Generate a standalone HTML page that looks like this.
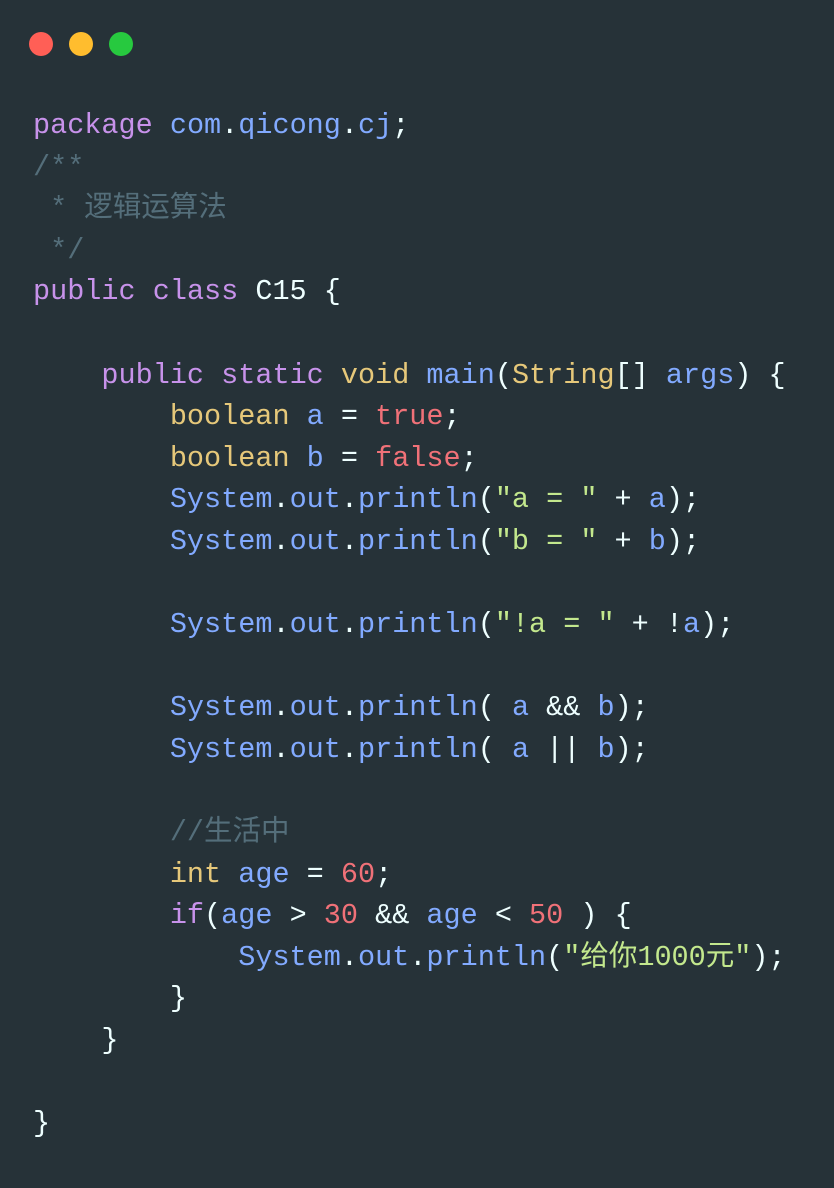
<!DOCTYPE html>
<html><head><meta charset="utf-8"><style>
html,body{margin:0;padding:0;background:#263238;width:834px;height:1188px;overflow:hidden}
.dots{position:absolute;top:32px;left:29px}
.dots span{position:absolute;width:24px;height:24px;border-radius:50%;top:0}
pre{position:absolute;left:33px;top:105px;margin:0;font-family:"Liberation Mono","Noto Sans CJK SC",monospace;font-size:28.5px;line-height:41.6px;color:#eeffff}
.k{color:#c792ea}.b{color:#82aaff}.c{color:#546e7a}.y{color:#e6c87a}.n{color:#f07178}.s{color:#c3e88d}
</style></head><body>
<div class="dots"><span style="left:0;background:#ff5f56"></span><span style="left:40px;background:#ffbd2e"></span><span style="left:80px;background:#27c93f"></span></div>
<pre><span class="k">package</span> <span class="b">com</span>.<span class="b">qicong</span>.<span class="b">cj</span>;
<span class="c">/**
 * 逻辑运算法
 */</span>
<span class="k">public</span> <span class="k">class</span> C15 {

    <span class="k">public</span> <span class="k">static</span> <span class="y">void</span> <span class="b">main</span>(<span class="y">String</span>[] <span class="b">args</span>) {
        <span class="y">boolean</span> <span class="b">a</span> = <span class="n">true</span>;
        <span class="y">boolean</span> <span class="b">b</span> = <span class="n">false</span>;
        <span class="b">System</span>.<span class="b">out</span>.<span class="b">println</span>(<span class="s">"a = "</span> + <span class="b">a</span>);
        <span class="b">System</span>.<span class="b">out</span>.<span class="b">println</span>(<span class="s">"b = "</span> + <span class="b">b</span>);

        <span class="b">System</span>.<span class="b">out</span>.<span class="b">println</span>(<span class="s">"!a = "</span> + !<span class="b">a</span>);

        <span class="b">System</span>.<span class="b">out</span>.<span class="b">println</span>( <span class="b">a</span> &amp;&amp; <span class="b">b</span>);
        <span class="b">System</span>.<span class="b">out</span>.<span class="b">println</span>( <span class="b">a</span> || <span class="b">b</span>);

        <span class="c">//生活中</span>
        <span class="y">int</span> <span class="b">age</span> = <span class="n">60</span>;
        <span class="k">if</span>(<span class="b">age</span> &gt; <span class="n">30</span> &amp;&amp; <span class="b">age</span> &lt; <span class="n">50</span> ) {
            <span class="b">System</span>.<span class="b">out</span>.<span class="b">println</span>(<span class="s">"给你1000元"</span>);
        }
    }

}</pre>
</body></html>
